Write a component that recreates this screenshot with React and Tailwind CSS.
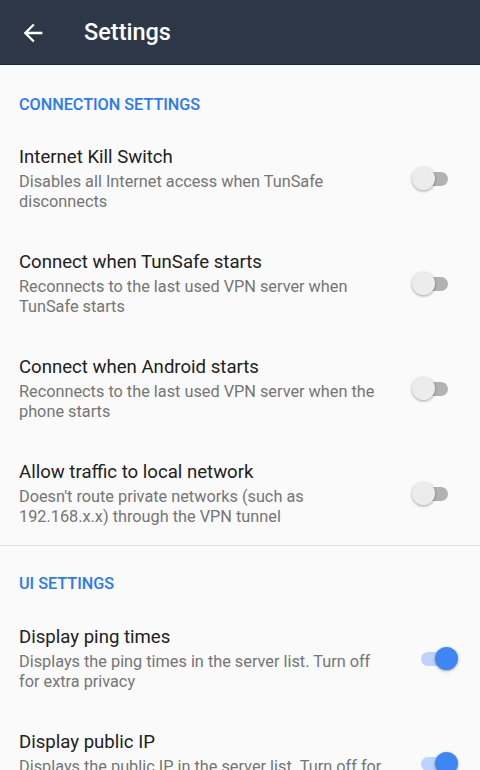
import React from "react";

function Toggle({ on }) {
  if (on) {
    return (
      <div className="relative w-[46px] h-[24px] shrink-0">
        <div className="absolute left-[9px] top-[5px] w-[34px] h-[14px] rounded-full bg-[#bcd4fb]" />
        <div className="absolute right-0 top-0 w-[23px] h-[23px] rounded-full bg-[#3f86f5] shadow-[0_1px_3px_rgba(0,0,0,0.35)]" />
      </div>
    );
  }
  return (
    <div className="relative w-[46px] h-[24px] shrink-0">
      <div className="absolute left-[2px] top-[5px] w-[34px] h-[14px] rounded-full bg-[#b2b2b2]" />
      <div className="absolute left-0 top-0 w-[23px] h-[23px] rounded-full bg-[#ececec] shadow-[0_1px_3px_rgba(0,0,0,0.35)]" />
    </div>
  );
}

function Row({ title, lines, on }) {
  return (
    <div className="flex items-center pl-[19px] pr-[22px] py-[20px]">
      <div className="flex-1 min-w-0">
        <div className="text-[18.6px] leading-[22px] text-[#212121]">{title}</div>
        <div className="mt-[4px] text-[16.3px] leading-[19.5px] text-[#757575]">
          {lines.map((l, i) => (
            <div key={i} className="whitespace-nowrap">{l}</div>
          ))}
        </div>
      </div>
      <Toggle on={on} />
    </div>
  );
}

export default function App() {
  return (
    <div
      className="w-[480px] h-[770px] overflow-hidden bg-[#fafafa]"
      style={{ fontFamily: "Roboto, 'Noto Sans', sans-serif" }}
    >
      <div className="h-[64px] bg-[#2e3748] flex items-center border-b border-[#1d273a] box-content">
        <svg className="ml-[19px] mt-[2px]" width="28" height="28" viewBox="0 0 24 24" fill="#ffffff">
          <path d="M20 11H7.83l5.59-5.59L12 4l-8 8 8 8 1.41-1.41L7.83 13H20v-2z" />
        </svg>
        <div className="ml-[37px] mt-[2px] text-[23.5px] font-medium text-white">Settings</div>
      </div>

      <div className="pl-[19px] pt-[30px] pb-[11px] text-[16.2px] leading-[20px] font-medium text-[#2979ff]">
        CONNECTION SETTINGS
      </div>
      <Row
        title="Internet Kill Switch"
        lines={["Disables all Internet access when TunSafe", "disconnects"]}
      />
      <Row
        title="Connect when TunSafe starts"
        lines={["Reconnects to the last used VPN server when", "TunSafe starts"]}
      />
      <Row
        title="Connect when Android starts"
        lines={["Reconnects to the last used VPN server when the", "phone starts"]}
      />
      <Row
        title="Allow traffic to local network"
        lines={["Doesn't route private networks (such as", "192.168.x.x) through the VPN tunnel"]}
      />
      <div className="h-[1px] bg-[#dedede] mt-[-1px]" />

      <div className="pl-[19px] pt-[28px] pb-[12px] text-[16.2px] leading-[20px] font-medium text-[#2979ff]">
        UI SETTINGS
      </div>
      <Row
        title="Display ping times"
        lines={["Displays the ping times in the server list. Turn off", "for extra privacy"]}
        on
      />
      <Row
        title="Display public IP"
        lines={["Displays the public IP in the server list. Turn off for", "extra privacy"]}
        on
      />
    </div>
  );
}
